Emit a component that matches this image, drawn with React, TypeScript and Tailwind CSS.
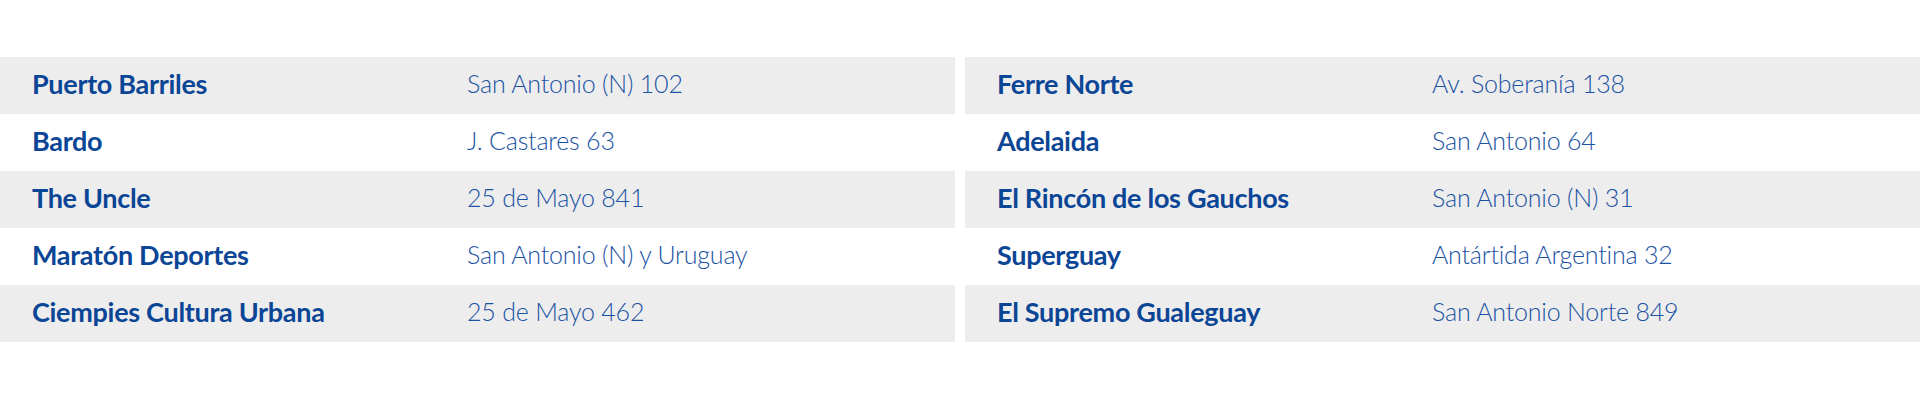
const left = [
  { name: "Puerto Barriles", address: "San Antonio (N) 102" },
  { name: "Bardo", address: "J. Castares 63" },
  { name: "The Uncle", address: "25 de Mayo 841" },
  { name: "Maratón Deportes", address: "San Antonio (N) y Uruguay" },
  { name: "Ciempies Cultura Urbana", address: "25 de Mayo 462" },
];

const right = [
  { name: "Ferre Norte", address: "Av. Soberanía 138" },
  { name: "Adelaida", address: "San Antonio 64" },
  { name: "El Rincón de los Gauchos", address: "San Antonio (N) 31" },
  { name: "Superguay", address: "Antártida Argentina 32" },
  { name: "El Supremo Gualeguay", address: "San Antonio Norte 849" },
];

type Shop = { name: string; address: string };

function ShopList({ shops }: { shops: Shop[] }) {
  return (
    <div className="flex flex-col">
      {shops.map((shop, i) => (
        <div
          key={shop.name}
          className={
            "grid grid-cols-[435px_1fr] items-center h-[57px] pl-8 pb-1 " +
            (i % 2 === 0 ? "bg-[#ededed]" : "bg-white")
          }
        >
          <div className="font-bold text-[#0b4596] text-[27px] tracking-[-0.3px] leading-none">
            {shop.name}
          </div>
          <div className="font-light text-[#1a52a3] text-[25px] tracking-[-0.2px] leading-none">
            {shop.address}
          </div>
        </div>
      ))}
    </div>
  );
}

export default function App() {
  return (
    <div
      className="w-[1920px] h-[400px] bg-white pt-[57px]"
      style={{ fontFamily: "Lato, 'Open Sans', sans-serif" }}
    >
      <div className="grid grid-cols-2 gap-x-[10px]">
        <ShopList shops={left} />
        <ShopList shops={right} />
      </div>
    </div>
  );
}
